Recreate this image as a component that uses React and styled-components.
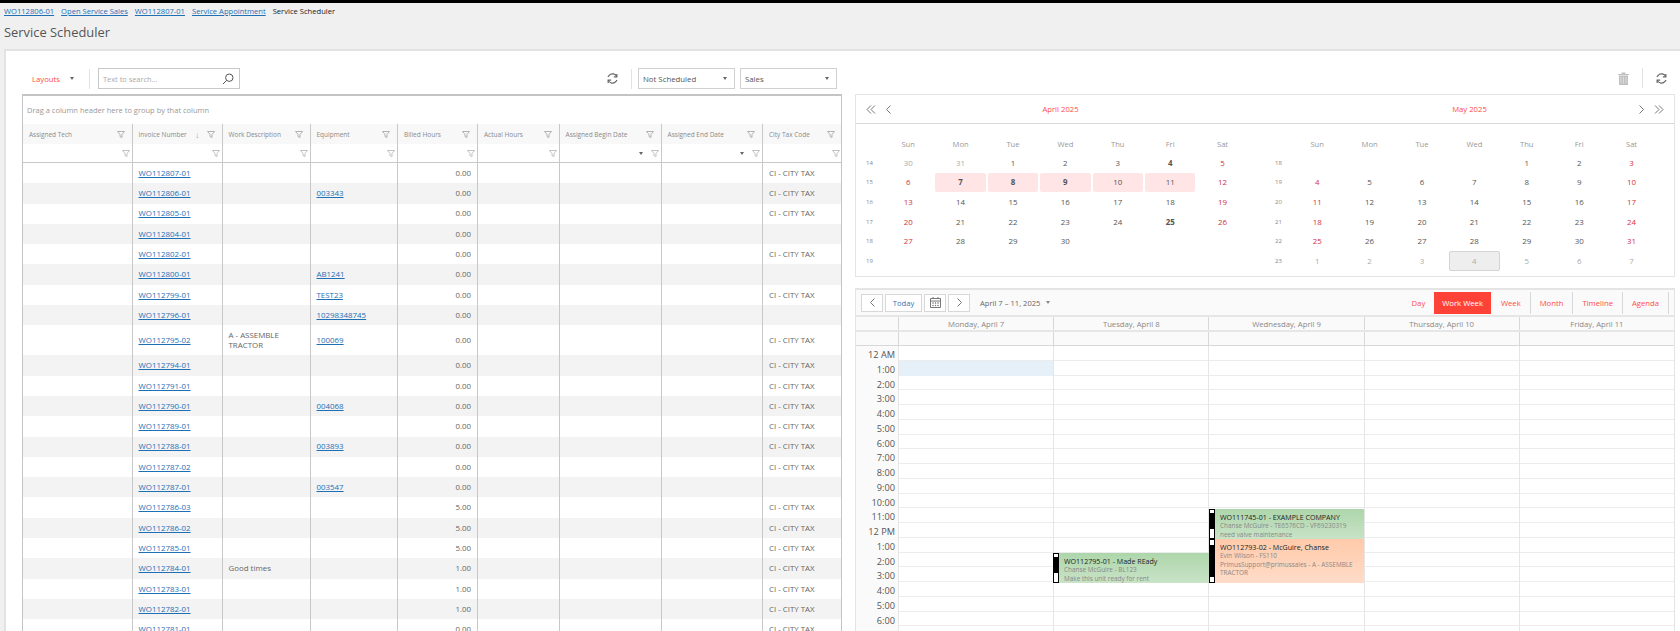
import React from "react"
import styled, { createGlobalStyle } from "styled-components"

const GlobalStyle = createGlobalStyle`
  html, body { margin: 0; padding: 0; height: 631px; overflow: hidden; background: #f0f0f0; }
  body { font-family: "Open Sans", "Noto Sans", sans-serif; color: #555; }
  * { box-sizing: border-box; }
`

const RED = "#ff4b4b"
const COLS = "108.5px 90px 88px 87.5px 80px 81.6px 102px 101.4px 80px"

const Page = styled.div`
  height: 631px;
  overflow: hidden;
  border-top: 3px solid #000;
  display: flex;
  flex-direction: column;
`
const Crumbs = styled.div`
  display: flex;
  gap: 7px;
  padding: 1px 4px 0;
  height: 15px;
  font-size: 7.6px;
  line-height: 14px;
  color: #222;
`
const Crumb = styled.a`
  color: #1f6fb5;
  text-decoration: underline;
`
const Title = styled.h1`
  margin: 0;
  padding: 3px 4px 0;
  height: 31px;
  font-size: 12.9px;
  line-height: 22px;
  font-weight: 400;
  color: #555;
`
const Panel = styled.div`
  flex: 1;
  margin-left: 4px;
  background: #fff;
  border: 2px solid #e2e2e2;
  border-right: none;
  border-bottom: none;
  padding: 17px 5px 0 16px;
  min-height: 0;
  overflow: hidden;
`
const Toolbar = styled.div`
  display: flex;
  align-items: center;
  height: 21px;
  margin-bottom: 5px;
`
const LayoutsBtn = styled.div`
  width: 59px;
  padding-left: 10px;
  display: flex;
  align-items: center;
  font-size: 7.7px;
  color: ${RED};
  gap: 10px;
`
const Caret = styled.span`
  width: 0;
  height: 0;
  flex: none;
  border-left: 2.5px solid transparent;
  border-right: 2.5px solid transparent;
  border-top: 3px solid ${p => p.$color || "#666"};
`
const Sep = styled.div`
  width: 1px;
  height: 20px;
  background: #e2e2e2;
  margin: ${p => p.$margin || "0 8px"};
`
const Search = styled.div`
  width: 142px;
  height: 21px;
  border: 1px solid #c8c8c8;
  display: flex;
  align-items: center;
  justify-content: space-between;
  padding: 0 5px 0 4px;
  font-size: 7.4px;
  color: #aaa;
`
const IconBtn = styled.span`
  display: inline-flex;
  color: ${p => p.$color || "#666"};
  margin: ${p => p.$margin || "0"};
`
const Select = styled.div`
  width: ${p => p.$width}px;
  height: 21px;
  margin-right: 5px;
  border: 1px solid #d0d0d0;
  display: flex;
  align-items: center;
  justify-content: space-between;
  padding: 0 7px 0 4px;
  font-size: 7.8px;
  color: #555;
`
const Columns = styled.div`
  display: flex;
  align-items: flex-start;
`
const Grid = styled.div`
  width: 820px;
  flex: none;
  border: 1px solid #c4c4c4;
  border-top-width: 2px;
  margin-right: 13px;
`
const GroupPanel = styled.div`
  height: 28px;
  padding-left: 4px;
  font-size: 7.5px;
  line-height: 28px;
  color: #999;
`
const GridRow = styled.div`
  display: grid;
  grid-template-columns: ${COLS};
  background: ${p => p.$bg || "#fff"};
  border-bottom: ${p => p.$line ? "1px solid #c8c8c8" : "none"};
`
const HeadCell = styled.div`
  height: 20px;
  padding: 0 7px 0 6px;
  display: flex;
  align-items: center;
  justify-content: space-between;
  font-size: 6.5px;
  color: #8a8a8a;
  border-left: ${p => p.$first ? "none" : "1px solid #c8c8c8"};
  white-space: nowrap;
`
const HeadRight = styled.span`
  display: inline-flex;
  align-items: center;
  gap: 7px;
`
const SortArrow = styled.span`
  font-size: 9px;
  line-height: 9px;
  color: #aaa;
`
const FilterCell = styled.div`
  height: 18px;
  padding: 0 2px 0 6px;
  display: flex;
  align-items: center;
  justify-content: flex-end;
  gap: 8px;
  border-left: ${p => p.$first ? "none" : "1px solid #c8c8c8"};
`
const Cell = styled.div`
  min-height: ${p => p.$tall ? 30 : 20.3}px;
  padding: 0 6px;
  display: flex;
  align-items: center;
  justify-content: ${p => p.$right ? "flex-end" : "flex-start"};
  font-size: 7.9px;
  line-height: 10.5px;
  color: #666;
  border-left: ${p => p.$first ? "none" : "1px solid #c8c8c8"};
`
const RowLink = styled.a`
  color: #1f6fb5;
  text-decoration: underline;
`
const Right = styled.div`
  flex: 1;
  min-width: 0;
`
const CalTools = styled.div`
  height: 0;
  position: relative;
`
const TopIcons = styled.div`
  position: absolute;
  right: 0;
  top: -27px;
  height: 22px;
  display: flex;
  align-items: center;
`
const CalPanel = styled.div`
  height: 183px;
  border: 1px solid #e4e4e4;
  display: grid;
  grid-template-columns: 1fr 1fr;
`
const Month = styled.div`
  display: flex;
  flex-direction: column;
`
const MonthHead = styled.div`
  height: 29px;
  border-bottom: 1px solid #d8d8d8;
  display: flex;
  align-items: center;
  justify-content: space-between;
  padding: 0 10px;
`
const MonthTitle = styled.span`
  flex: 1;
  text-align: center;
  font-size: 7.7px;
  color: ${RED};
`
const MonthNav = styled.span`
  width: 26px;
  display: flex;
  justify-content: space-between;
  color: #777;
  align-items: center;
`
const DayGrid = styled.div`
  display: grid;
  grid-template-columns: 18px repeat(7, 52.4px);
  grid-template-rows: 18px repeat(6, 19.6px);
  padding: 11px 0 0 8px;
`
const DayHead = styled.div`
  display: flex;
  align-items: center;
  justify-content: center;
  font-size: 7.6px;
  color: #999;
`
const WeekNo = styled.div`
  display: flex;
  align-items: center;
  font-size: 6px;
  padding-left: 2px;
  color: #888;
  white-space: nowrap;
`
const Day = styled.div`
  margin: 0 1px;
  display: flex;
  align-items: center;
  justify-content: center;
  font-size: 7.9px;
  border-radius: 2px;
  color: ${p => p.$muted ? "#aaa" : p.$red ? "#d32f3f" : "#555"};
  font-weight: ${p => p.$bold ? 700 : 400};
  background: ${p => p.$sel ? "#ffe5e5" : p.$today ? "#eeeeee" : "transparent"};
  border: ${p => p.$today ? "1px solid #d4d4d4" : "none"};
`
const Scheduler = styled.div`
  margin-top: 11px;
  border: 1px solid #e4e4e4;
  border-top-width: 2px;
  position: relative;
`
const SchedBar = styled.div`
  height: 27px;
  background: #fafafa;
  border-bottom: 2px solid #e6e6e6;
  display: flex;
  align-items: center;
  padding-left: 5px;
  gap: 2px;
`
const NavBtn = styled.div`
  height: 18px;
  width: ${p => p.$width}px;
  border: 1px solid #d8d8d8;
  background: #fff;
  display: flex;
  align-items: center;
  justify-content: center;
  font-size: 7.6px;
  color: ${p => p.$blue ? "#2a75bb" : "#777"};
`
const RangeLabel = styled.div`
  margin-left: 8px;
  font-size: 7.6px;
  color: #666;
  display: flex;
  align-items: center;
  gap: 6px;
`
const Views = styled.div`
  margin-left: auto;
  margin-right: 5px;
  display: flex;
  align-items: center;
  height: 22px;
`
const View = styled.div`
  height: 22px;
  padding: 0 ${p => p.$pad || 9}px;
  display: flex;
  align-items: center;
  font-size: 7.7px;
  color: ${p => p.$active ? "#fff" : RED};
  background: ${p => p.$active ? "#ff4238" : "transparent"};
  border-right: ${p => p.$active || p.$plain ? "none" : "1px solid #d8d8d8"};
  margin-right: ${p => p.$active ? "1px" : 0};
`
const TimeRow = styled.div`
  display: grid;
  grid-template-columns: 42px repeat(5, 1fr);
  height: ${p => p.$height}px;
  background: ${p => p.$bg || "transparent"};
  border-bottom: ${p => p.$line || "1px solid #ececec"};
`
const DateHead = styled.div`
  display: flex;
  align-items: center;
  justify-content: center;
  font-size: 7.7px;
  color: #888;
  background: #fafafa;
  border-left: ${p => p.$first ? "none" : "1px solid #d8d8d8"};
`
const Slot = styled.div`
  background: ${p => p.$hot ? "#e6f0f9" : "transparent"};
  border-left: 1px solid #e6e6e6;
`
const AllDay = styled.div`
  background: #fafafa;
  border-left: ${p => p.$first ? "none" : "1px solid #d8d8d8"};
`
const TimeLabel = styled.div`
  text-align: right;
  padding: 2px 3px 0 0;
  font-size: 9.2px;
  line-height: 13px;
  color: #555;
  background: #fafafa;
`
const Body = styled.div`
  position: relative;
`
const Event = styled.div`
  position: absolute;
  left: ${p => p.$left}px;
  top: ${p => p.$top}px;
  width: ${p => p.$width}px;
  height: ${p => p.$height}px;
  padding: 0 0 0 11px;
  background: ${p => p.$orange
    ? "linear-gradient(#ffcaaa, #ffdcc8)"
    : "linear-gradient(#add6aa, #c9e3c7)"};
  overflow: hidden;
`
const Strip = styled.div`
  position: absolute;
  left: 0;
  top: 0;
  bottom: 0;
  width: 6px;
  background: #000;
  display: flex;
  flex-direction: column;
  justify-content: space-between;
`
const Handle = styled.div`
  height: ${p => p.$h}px;
  background: #fff;
  border: 1px solid #000;
`
const EventTitle = styled.div`
  font-size: 7.1px;
  line-height: 10px;
  margin-top: ${p => p.$offset}px;
  color: #222;
  white-space: nowrap;
`
const EventLine = styled.div`
  font-size: 6.4px;
  line-height: 8.5px;
  color: #888;
  white-space: ${p => p.$wrap ? "normal" : "nowrap"};
`

const Filter = ({ color = "#aaa" }) => (
  <svg width="8" height="7" viewBox="0 0 8 7" fill="none" stroke={color} strokeWidth="0.9">
    <path d="M0.5 0.5h7L5 3.4V6.5L3 5.6V3.4z" />
  </svg>
)
const Refresh = ({ size = 13 }) => (
  <svg width={size} height={size} viewBox="0 0 24 24" fill="none" stroke="#666" strokeWidth="2.2">
    <path d="M20 9A8.5 8.5 0 0 0 5.5 6.5L3.5 9" />
    <path d="M20 3.5V9h-5.5" />
    <path d="M4 15a8.5 8.5 0 0 0 14.5 2.5l2-2.5" />
    <path d="M4 20.5V15h5.5" />
  </svg>
)
const SearchIcon = () => (
  <svg width="12" height="12" viewBox="0 0 12 12" fill="none" stroke="#555" strokeWidth="1">
    <circle cx="7.3" cy="4.7" r="3.7" />
    <path d="M4.6 7.4L1 11" />
  </svg>
)
const Trash = () => (
  <svg width="11" height="13" viewBox="0 0 11 13" fill="#c0c0c0">
    <path d="M0 2h11v1H0zM3.5 0.5h4v1.5h-4zM1 3.6h9v9.4H1z" />
    <path d="M3 5v6.5M5.5 5v6.5M8 5v6.5" stroke="#e4e4e4" strokeWidth="0.8" />
  </svg>
)
const Chevron = ({ dir, double }) => (
  <svg width={double ? 10 : 7} height="9" viewBox={double ? "0 0 10 9" : "0 0 7 9"} fill="none" stroke="#777" strokeWidth="1">
    {dir === "left"
      ? <path d={double ? "M5 0.5L1 4.5l4 4M9 0.5L5 4.5l4 4" : "M5.5 0.5L1.5 4.5l4 4"} />
      : <path d={double ? "M1 0.5L5 4.5l-4 4M5 0.5L9 4.5l-4 4" : "M1.5 0.5L5.5 4.5l-4 4"} />}
  </svg>
)
const CalIcon = () => (
  <svg width="11" height="11" viewBox="0 0 11 11" fill="none" stroke="#777" strokeWidth="1">
    <path d="M0.5 1.5h10v9h-10zM0.5 4h10M3 0v2M8 0v2" />
    <path d="M2.5 5.5h1v1h-1zM5 5.5h1v1H5zM7.5 5.5h1v1h-1zM2.5 8h1v1h-1zM5 8h1v1H5zM7.5 8h1v1h-1z" fill="#777" strokeWidth="0.3" />
  </svg>
)

const columns = [
  { name: "Assigned Tech" },
  { name: "Invoice Number", sorted: true },
  { name: "Work Description" },
  { name: "Equipment" },
  { name: "Billed Hours" },
  { name: "Actual Hours" },
  { name: "Assigned Begin Date", caret: true },
  { name: "Assigned End Date", caret: true },
  { name: "City Tax Code" },
]

// invoice, description, equipment, hours, tax
const rows = [
  ["WO112807-01", "", "", "0.00", 1],
  ["WO112806-01", "", "003343", "0.00", 1],
  ["WO112805-01", "", "", "0.00", 1],
  ["WO112804-01", "", "", "0.00", 0],
  ["WO112802-01", "", "", "0.00", 1],
  ["WO112800-01", "", "AB1241", "0.00", 0],
  ["WO112799-01", "", "TEST23", "0.00", 1],
  ["WO112796-01", "", "10298348745", "0.00", 0],
  ["WO112795-02", "A - ASSEMBLE TRACTOR", "100069", "0.00", 1],
  ["WO112794-01", "", "", "0.00", 1],
  ["WO112791-01", "", "", "0.00", 1],
  ["WO112790-01", "", "004068", "0.00", 1],
  ["WO112789-01", "", "", "0.00", 1],
  ["WO112788-01", "", "003893", "0.00", 1],
  ["WO112787-02", "", "", "0.00", 1],
  ["WO112787-01", "", "003547", "0.00", 0],
  ["WO112786-03", "", "", "5.00", 1],
  ["WO112786-02", "", "", "5.00", 1],
  ["WO112785-01", "", "", "5.00", 1],
  ["WO112784-01", "Good times", "", "1.00", 1],
  ["WO112783-01", "", "", "1.00", 1],
  ["WO112782-01", "", "", "1.00", 1],
  ["WO112781-01", "", "", "0.00", 1],
]

const weekdays = ["Sun", "Mon", "Tue", "Wed", "Thu", "Fri", "Sat"]
const april = {
  weeks: [14, 15, 16, 17, 18, 19],
  days: [30, 31, 1, 2, 3, 4, 5, 6, 7, 8, 9, 10, 11, 12, 13, 14, 15, 16, 17, 18, 19, 20, 21, 22, 23, 24, 25, 26, 27, 28, 29, 30, "", "", "", "", "", "", "", "", "", ""],
  bold: [5, 8, 9, 10, 26],
  sel: [8, 9, 10, 11, 12],
}
const may = {
  weeks: [18, 19, 20, 21, 22, 23],
  days: ["", "", "", "", 1, 2, 3, 4, 5, 6, 7, 8, 9, 10, 11, 12, 13, 14, 15, 16, 17, 18, 19, 20, 21, 22, 23, 24, 25, 26, 27, 28, 29, 30, 31, 1, 2, 3, 4, 5, 6, 7],
  muted: [35, 36, 37, 38, 39, 40, 41],
  today: 38,
  bold: [],
  sel: [],
}

const CalendarMonth = ({ title, data, side }) => (
  <Month>
    <MonthHead>
      {side === "left"
        ? <MonthNav><Chevron dir="left" double /><Chevron dir="left" /></MonthNav>
        : <MonthNav />}
      <MonthTitle>{title}</MonthTitle>
      {side === "right"
        ? <MonthNav><Chevron dir="right" /><Chevron dir="right" double /></MonthNav>
        : <MonthNav />}
    </MonthHead>
    <DayGrid>
      <div />
      {weekdays.map(d => <DayHead key={d}>{d}</DayHead>)}
      {data.weeks.map((w, r) => (
        <React.Fragment key={w}>
          <WeekNo>{w}</WeekNo>
          {data.days.slice(r * 7, r * 7 + 7).map((d, i) => {
            const idx = r * 7 + i
            const muted = data.muted ? data.muted.includes(idx) : (r === 0 && d > 20)
            return (
              <Day
                key={idx}
                $muted={muted}
                $red={!muted && (i === 0 || i === 6)}
                $bold={data.bold.includes(idx)}
                $sel={data.sel.includes(idx)}
                $today={data.today === idx}
              >
                {d}
              </Day>
            )
          })}
        </React.Fragment>
      ))}
    </DayGrid>
  </Month>
)

const hours = ["12 AM", "1:00", "2:00", "3:00", "4:00", "5:00", "6:00", "7:00", "8:00", "9:00", "10:00", "11:00", "12 PM", "1:00", "2:00", "3:00", "4:00", "5:00", "6:00", ""]

const App = () => (
  <Page>
    <GlobalStyle />
    <Crumbs>
      <Crumb>WO112806-01</Crumb>
      <Crumb>Open Service Sales</Crumb>
      <Crumb>WO112807-01</Crumb>
      <Crumb>Service Appointment</Crumb>
      <span>Service Scheduler</span>
    </Crumbs>
    <Title>Service Scheduler</Title>
    <Panel>
      <Toolbar>
        <LayoutsBtn>Layouts <Caret /></LayoutsBtn>
        <Sep />
        <Search>Text to search... <SearchIcon /></Search>
        <IconBtn $margin="0 0 0 366px"><Refresh /></IconBtn>
        <Sep $margin="0 6px 0 12px" />
        <Select $width={97}>Not Scheduled <Caret /></Select>
        <Select $width={97}>Sales <Caret /></Select>
      </Toolbar>
      <Columns>
        <Grid>
          <GroupPanel>Drag a column header here to group by that column</GroupPanel>
          <GridRow $bg="#f8f8f8">
            {columns.map((c, i) => (
              <HeadCell key={c.name} $first={i === 0}>
                {c.name}
                <HeadRight>
                  {c.sorted && <SortArrow>↓</SortArrow>}
                  <Filter />
                </HeadRight>
              </HeadCell>
            ))}
          </GridRow>
          <GridRow $line>
            {columns.map((c, i) => (
              <FilterCell key={c.name} $first={i === 0}>
                {c.caret && <Caret />}
                <Filter color="#bbb" />
              </FilterCell>
            ))}
          </GridRow>
          {rows.map((r, i) => {
            const tall = r[1].length > 12
            return (
              <GridRow key={r[0]} $bg={i % 2 ? "#f3f3f3" : "#fff"}>
                <Cell $first $tall={tall} />
                <Cell $tall={tall}><RowLink>{r[0]}</RowLink></Cell>
                <Cell $tall={tall}>{r[1]}</Cell>
                <Cell $tall={tall}><RowLink>{r[2]}</RowLink></Cell>
                <Cell $tall={tall} $right>{r[3]}</Cell>
                <Cell $tall={tall} />
                <Cell $tall={tall} />
                <Cell $tall={tall} />
                <Cell $tall={tall}>{r[4] ? "CI - CITY TAX" : ""}</Cell>
              </GridRow>
            )
          })}
        </Grid>
        <Right>
          <CalTools>
            <TopIcons>
              <IconBtn><Trash /></IconBtn>
              <Sep $margin="0 12px 0 13px" />
              <IconBtn $margin="0 7px 0 0"><Refresh /></IconBtn>
            </TopIcons>
          </CalTools>
          <CalPanel>
            <CalendarMonth title="April 2025" data={april} side="left" />
            <CalendarMonth title="May 2025" data={may} side="right" />
          </CalPanel>
          <Scheduler>
            <SchedBar>
              <NavBtn $width={22}><Chevron dir="left" /></NavBtn>
              <NavBtn $width={37} $blue>Today</NavBtn>
              <NavBtn $width={22}><CalIcon /></NavBtn>
              <NavBtn $width={22}><Chevron dir="right" /></NavBtn>
              <RangeLabel>April 7 – 11, 2025 <Caret $color="#888" /></RangeLabel>
              <Views>
                <View $plain>Day</View>
                <View $active $pad={8}>Work Week</View>
                <View>Week</View>
                <View>Month</View>
                <View>Timeline</View>
                <View>Agenda</View>
              </Views>
            </SchedBar>
            <TimeRow $height={15} $line="2px solid #e6e6e6">
              <DateHead $first />
              {["Monday, April 7", "Tuesday, April 8", "Wednesday, April 9", "Thursday, April 10", "Friday, April 11"].map(d => (
                <DateHead key={d}>{d}</DateHead>
              ))}
            </TimeRow>
            <TimeRow $height={14} $line="1px solid #d8d8d8">
              <AllDay $first />
              <AllDay /><AllDay /><AllDay /><AllDay /><AllDay />
            </TimeRow>
            <Body>
              {hours.map((h, i) => (
                <TimeRow key={i} $height={14.76}>
                  <TimeLabel>{h}</TimeLabel>
                  <Slot $hot={i === 1} />
                  <Slot />
                  <Slot />
                  <Slot />
                  <Slot />
                </TimeRow>
              ))}
              <Event $left={197} $top={207} $width={156} $height={30}>
                <Strip><Handle $h={5} /><Handle $h={11} /></Strip>
                <EventTitle $offset={3}>WO112795-01 - Made REady</EventTitle>
                <EventLine>Chanse McGuire - BL123</EventLine>
                <EventLine>Make this unit ready for rent</EventLine>
              </Event>
              <Event $left={353} $top={163} $width={155} $height={30}>
                <Strip><Handle $h={5} /><Handle $h={11} /></Strip>
                <EventTitle $offset={3}>WO111745-01 - EXAMPLE COMPANY</EventTitle>
                <EventLine>Chanse McGuire - TE6576CD - VF69230319</EventLine>
                <EventLine>need valve maintenance</EventLine>
              </Event>
              <Event $left={353} $top={193} $width={155} $height={44} $orange>
                <Strip><Handle $h={7} /><Handle $h={7} /></Strip>
                <EventTitle $offset={3}>WO112793-02 - McGuire, Chanse</EventTitle>
                <EventLine>Evin Wilson - FS110</EventLine>
                <EventLine $wrap>PrimusSupport@primussales - A - ASSEMBLE TRACTOR</EventLine>
              </Event>
            </Body>
          </Scheduler>
        </Right>
      </Columns>
    </Panel>
  </Page>
)

export default App
